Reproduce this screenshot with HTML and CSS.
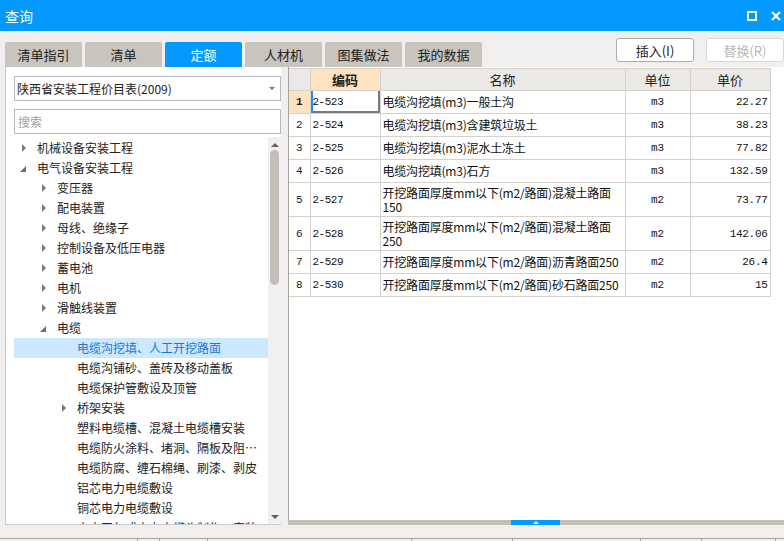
FILE: index.html
```html
<!DOCTYPE html>
<html lang="zh">
<head>
<meta charset="utf-8">
<title>查询</title>
<link rel="stylesheet" href="styles.css">
</head>
<body>
<div class="win">
  <div class="titlebar">
    <span class="title">查询</span>
    <div class="winbtns">
      <svg width="10" height="10" viewBox="0 0 10 10"><rect x="1" y="1" width="8" height="8" fill="none" stroke="#fff" stroke-width="2"/></svg>
      <svg width="10" height="10" viewBox="0 0 10 10"><path d="M1 1L9 9M9 1L1 9" stroke="#fff" stroke-width="2.2"/></svg>
    </div>
  </div>

  <div class="toolbar">
    <div class="tabs">
      <div class="tab">清单指引</div>
      <div class="tab">清单</div>
      <div class="tab active">定额</div>
      <div class="tab">人材机</div>
      <div class="tab">图集做法</div>
      <div class="tab">我的数据</div>
    </div>
    <div class="actions">
      <button class="btn">插入(I)</button>
      <button class="btn disabled">替换(R)</button>
    </div>
  </div>

  <div class="main">
    <div class="leftpane">
      <div class="select"><span>陕西省安装工程价目表(2009)</span><i class="caret"></i></div>
      <div class="search">搜索</div>
      <div class="treewrap">
        <ul class="tree">
          <li class="node l0"><i class="arr closed"></i><span>机械设备安装工程</span></li>
          <li class="node l0"><i class="arr open"></i><span>电气设备安装工程</span></li>
          <li class="node l1"><i class="arr closed"></i><span>变压器</span></li>
          <li class="node l1"><i class="arr closed"></i><span>配电装置</span></li>
          <li class="node l1"><i class="arr closed"></i><span>母线、绝缘子</span></li>
          <li class="node l1"><i class="arr closed"></i><span>控制设备及低压电器</span></li>
          <li class="node l1"><i class="arr closed"></i><span>蓄电池</span></li>
          <li class="node l1"><i class="arr closed"></i><span>电机</span></li>
          <li class="node l1"><i class="arr closed"></i><span>滑触线装置</span></li>
          <li class="node l1"><i class="arr open"></i><span>电缆</span></li>
          <li class="node l2 selected"><i class="arr"></i><span>电缆沟挖填、人工开挖路面</span></li>
          <li class="node l2"><i class="arr"></i><span>电缆沟铺砂、盖砖及移动盖板</span></li>
          <li class="node l2"><i class="arr"></i><span>电缆保护管敷设及顶管</span></li>
          <li class="node l2"><i class="arr closed"></i><span>桥架安装</span></li>
          <li class="node l2"><i class="arr"></i><span>塑料电缆槽、混凝土电缆槽安装</span></li>
          <li class="node l2"><i class="arr"></i><span>电缆防火涂料、堵洞、隔板及阻燃槽盒安装</span></li>
          <li class="node l2"><i class="arr"></i><span>电缆防腐、缠石棉绳、刷漆、剥皮</span></li>
          <li class="node l2"><i class="arr"></i><span>铝芯电力电缆敷设</span></li>
          <li class="node l2"><i class="arr"></i><span>铜芯电力电缆敷设</span></li>
          <li class="node l2"><i class="arr"></i><span>户内干包式电力电缆头制作、安装</span></li>
        </ul>
        <div class="vscroll">
          <i class="sc-up"></i>
          <div class="thumb"></div>
          <i class="sc-down"></i>
        </div>
      </div>
    </div>

    <div class="rightpane">
      <div class="grid-area">
        <table class="grid">
          <colgroup>
            <col class="c-num"><col class="c-code"><col class="c-name"><col class="c-unit"><col class="c-price">
          </colgroup>
          <thead>
            <tr>
              <th class="corner"></th>
              <th class="hl">编码</th>
              <th>名称</th>
              <th>单位</th>
              <th>单价</th>
            </tr>
          </thead>
          <tbody>
            <tr><td class="num cur">1</td><td class="code focus">2-523</td><td class="name">电缆沟挖填(m3)一般土沟</td><td class="unit">m3</td><td class="price">22.27</td></tr>
            <tr><td class="num">2</td><td class="code">2-524</td><td class="name">电缆沟挖填(m3)含建筑垃圾土</td><td class="unit">m3</td><td class="price">38.23</td></tr>
            <tr><td class="num">3</td><td class="code">2-525</td><td class="name">电缆沟挖填(m3)泥水土冻土</td><td class="unit">m3</td><td class="price">77.82</td></tr>
            <tr><td class="num">4</td><td class="code">2-526</td><td class="name">电缆沟挖填(m3)石方</td><td class="unit">m3</td><td class="price">132.59</td></tr>
            <tr class="tall"><td class="num">5</td><td class="code">2-527</td><td class="name">开挖路面厚度mm以下(m2/路面)混凝土路面<br>150</td><td class="unit">m2</td><td class="price">73.77</td></tr>
            <tr class="tall"><td class="num">6</td><td class="code">2-528</td><td class="name">开挖路面厚度mm以下(m2/路面)混凝土路面<br>250</td><td class="unit">m2</td><td class="price">142.06</td></tr>
            <tr><td class="num">7</td><td class="code">2-529</td><td class="name">开挖路面厚度mm以下(m2/路面)沥青路面250</td><td class="unit">m2</td><td class="price">26.4</td></tr>
            <tr><td class="num">8</td><td class="code">2-530</td><td class="name">开挖路面厚度mm以下(m2/路面)砂石路面250</td><td class="unit">m2</td><td class="price">15</td></tr>
          </tbody>
        </table>
      </div>
      <div class="splitter"><span class="handle"><i></i></span></div>
    </div>
  </div>

  <div class="bottom">
    <div class="lower">
      <span class="lc w1"></span><span class="lc w2"></span><span class="lc w3"></span><span class="lc w4"></span><span class="lc w5"></span><span class="lc w6"></span><span class="lc w7"></span><span class="lc w8"></span><span class="lc w9"></span>
    </div>
  </div>
</div>
</body>
</html>
```

FILE: styles.css
```css
* { box-sizing: border-box; margin: 0; padding: 0; }
html, body { width: 784px; height: 541px; overflow: hidden; }
body {
  background: #f0efed;
  font-family: "Noto Sans CJK SC", "Microsoft YaHei", sans-serif;
  font-size: 12px;
  color: #222;
}
.win { display: flex; flex-direction: column; height: 541px; }

/* title bar */
.titlebar {
  height: 31px;
  flex: none;
  background: #0399fe;
  color: #fff;
  display: flex;
  align-items: center;
  justify-content: space-between;
  padding: 0 3px 0 5px;
}
.title { font-size: 14px; }
.winbtns { display: flex; align-items: center; gap: 14px; }

/* tabs + buttons */
.toolbar {
  height: 36px;
  flex: none;
  display: flex;
  justify-content: space-between;
  padding-left: 5px;
}
.tabs { display: flex; gap: 3px; align-self: flex-end; }
.tab {
  width: 77px;
  height: 25px;
  background: #c9c5be;
  border-radius: 2px 2px 0 0;
  display: flex;
  align-items: center;
  justify-content: center;
  font-size: 13px;
  color: #222;
}
.tab.active { background: #0399fe; color: #fff; }
.actions { display: flex; gap: 12px; padding-top: 7px; }
.btn {
  width: 78px;
  height: 24px;
  background: #fff;
  border: 1px solid #adadad;
  border-radius: 3px;
  font: 13px "Noto Sans CJK SC", sans-serif;
  color: #222;
}
.btn.disabled { color: #b8b8b8; border-color: #dadada; }

/* main area */
.main { height: 458px; flex: none; display: flex; }

.leftpane {
  width: 276px;
  margin-left: 5px;
  background: #fff;
  border-left: 1px solid #cbcbcb;
  border-bottom: 1px solid #cbcbcb;
  padding: 9px 0 0 8px;
  display: flex;
  flex-direction: column;
}
.select {
  height: 25px;
  border: 1px solid #b9b9b9;
  display: flex;
  align-items: center;
  justify-content: space-between;
  padding: 0 5px 0 2px;
  font-size: 12px;
  color: #222;
}
.caret {
  width: 0; height: 0;
  border-left: 3px solid transparent;
  border-right: 3px solid transparent;
  border-top: 3px solid #777;
}
.search {
  height: 25px;
  margin-top: 8px;
  border: 1px solid #b9b9b9;
  display: flex;
  align-items: center;
  padding-left: 3px;
  color: #a0a0a0;
  font-size: 12px;
}
.treewrap {
  flex: 1;
  margin-top: 3px;
  display: flex;
  overflow: hidden;
}
.tree {
  list-style: none;
  width: 254px;
  padding-top: 1px;
  overflow: hidden;
}
.node {
  height: 20px;
  line-height: 20px;
  display: flex;
  align-items: center;
  white-space: nowrap;
  padding-right: 10px;
  font-size: 12px;
  color: #222;
}
.node span { overflow: hidden; text-overflow: ellipsis; }
.l0 { padding-left: 8px; }
.l1 { padding-left: 28px; }
.l2 { padding-left: 48px; }
.arr { width: 15px; height: 20px; flex: none; position: relative; }
.arr.closed::before {
  content: "";
  position: absolute;
  left: 0; top: 6px;
  border-left: 4px solid #7a7a7a;
  border-top: 4px solid transparent;
  border-bottom: 4px solid transparent;
}
.arr.open::before {
  content: "";
  position: absolute;
  left: -2px; top: 8px;
  border-bottom: 6px solid #6e6e6e;
  border-left: 6px solid transparent;
}
.node.selected { background: #cce8ff; color: #1b78d2; }

.vscroll {
  width: 13px;
  background: #f0f0f0;
  display: flex;
  flex-direction: column;
  align-items: center;
}
.sc-up {
  margin-top: 6px;
  border-left: 4px solid transparent;
  border-right: 4px solid transparent;
  border-bottom: 4px solid #606060;
}
.thumb {
  margin-top: 3px;
  width: 9px;
  height: 135px;
  background: #c3bfb8;
  border-radius: 5px;
}
.sc-down {
  margin-top: auto;
  margin-bottom: 5px;
  border-left: 4px solid transparent;
  border-right: 4px solid transparent;
  border-top: 4px solid #606060;
}

/* right pane */
.rightpane {
  flex: 1;
  margin-left: 7px;
  display: flex;
  flex-direction: column;
}
.grid-area {
  flex: 1;
  background: #fff;
  border-left: 1px solid #a9a59d;
  padding-top: 1px;
}
.grid {
  border-collapse: collapse;
  table-layout: fixed;
  width: 481px;
}
.c-num { width: 21px; }
.c-code { width: 70px; }
.c-name { width: 245px; }
.c-unit { width: 65px; }
.c-price { width: 80px; }
.grid th, .grid td {
  border: 1px solid #d6d2cb;
  padding: 0;
  overflow: hidden;
  white-space: nowrap;
}
.grid th {
  height: 22px;
  background: #ebe9e6;
  font-size: 13px;
  font-weight: normal;
  color: #222;
  text-align: center;
}
.grid th.hl { background: #fee3c0; font-weight: bold; }
.grid th.corner { border-left: none; }
.grid tbody tr { height: 23px; }
.grid tbody tr.tall { height: 34px; }
.grid td { vertical-align: middle; }
.grid td.num {
  border-left: none;
  text-align: center;
  font: 11px "Liberation Mono", monospace;
  color: #222;
}
.grid td.num.cur { background: #fee3c0; font-weight: bold; }
.grid td.code {
  padding-left: 2px;
  font: 11px "Liberation Mono", monospace;
  letter-spacing: -0.5px;
  color: #111;
}
.grid td.focus { box-shadow: inset 2px 0 0 #1f8ffe, inset -2px -2px 0 #7b7b7b; }
.grid td.name {
  padding-left: 2px;
  font-size: 12px;
  line-height: 14px;
  letter-spacing: -0.2px;
  white-space: normal;
  color: #111;
}
.grid td.unit {
  text-align: center;
  font: 11px "Liberation Mono", monospace;
  color: #111;
}
.grid td.price {
  text-align: right;
  padding-right: 2px;
  font: 11px "Liberation Mono", monospace;
  letter-spacing: -0.3px;
  color: #111;
}

.splitter {
  height: 5px;
  flex: none;
  background: #c4c0b8;
  display: flex;
}
.handle {
  margin-left: 223px;
  width: 49px;
  height: 5px;
  background: #0399fe;
  display: flex;
  justify-content: center;
  align-items: center;
}
.handle i {
  border-left: 3px solid transparent;
  border-right: 3px solid transparent;
  border-bottom: 3px solid #fff;
}

/* bottom strip */
.bottom { flex: 1; padding-top: 13px; }
.lower { display: flex; height: 3px; border-top: 1px solid #a6a49c; }
.lc { border-right: 1px solid #a6a49c; flex: none; }
.w1 { width: 138px; }
.w2 { width: 22px; }
.w3 { width: 48px; }
.w4 { width: 204px; }
.w5 { width: 101px; }
.w6 { width: 128px; }
.w7 { width: 61px; }
.w8 { width: 74px; }
.w9 { width: 8px; border-right: none; }
```
